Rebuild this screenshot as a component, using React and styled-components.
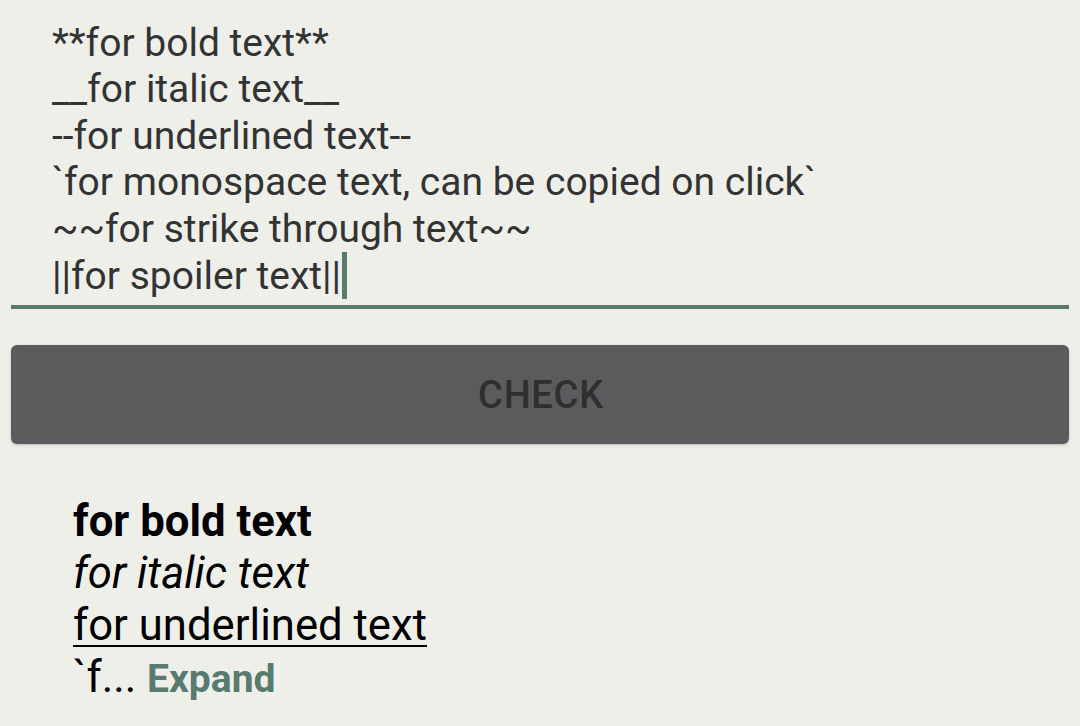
import React from "react";
import styled, { createGlobalStyle } from "styled-components";

const Global = createGlobalStyle`
  html, body {
    margin: 0;
    padding: 0;
    background: #efefea;
  }
  body {
    font-family: Roboto, "Noto Sans", "Liberation Sans", sans-serif;
  }
`;

const Page = styled.div`
  width: 1080px;
  height: 726px;
  box-sizing: border-box;
  padding: 0 11px;
  background: #efefea;
  overflow: hidden;
`;

const Editor = styled.div`
  padding: 20px 0 6px 41px;
  border-bottom: 4px solid #587a6f;
  color: #333333;
  font-size: 39px;
  line-height: 46.4px;
`;

const Line = styled.div`
  white-space: pre;
`;

const Caret = styled.span`
  display: inline-block;
  width: 5px;
  height: 47px;
  margin-left: 1px;
  background: #587a6f;
  vertical-align: -10px;
`;

const CheckButton = styled.button`
  display: flex;
  align-items: center;
  justify-content: center;
  width: 100%;
  height: 99px;
  margin-top: 36px;
  border: none;
  border-radius: 6px;
  background: #5b5b5d;
  box-shadow: 0 1px 3px rgba(0, 0, 0, 0.22);
  color: #2f2f2f;
  font-family: Roboto, "Noto Sans", "Liberation Sans", sans-serif;
  font-weight: 500;
  font-size: 38px;
  letter-spacing: 0.02em;
  padding: 0 0 0 2px;
`;

const Output = styled.div`
  padding: 51px 0 0 62px;
  color: #000000;
  font-size: 43.7px;
  line-height: 52px;
`;

const OutLine = styled.div`
  font-weight: ${(p) => (p.$bold ? 700 : 400)};
  font-style: ${(p) => (p.$italic ? "italic" : "normal")};
  text-decoration: ${(p) => (p.$underline ? "underline" : "none")};
  text-decoration-thickness: 2px;
  text-underline-offset: 5px;
  white-space: pre;
`;

const Expand = styled.span`
  color: #587a6f;
  font-weight: 700;
  font-size: 39px;
`;

export default function App() {
  return (
    <Page>
      <Global />
      <Editor>
        <Line>**for bold text**</Line>
        <Line>__for italic text__</Line>
        <Line>--for underlined text--</Line>
        <Line>`for monospace text, can be copied on click`</Line>
        <Line>~~for strike through text~~</Line>
        <Line>
          ||for spoiler text||
          <Caret />
        </Line>
      </Editor>
      <CheckButton>CHECK</CheckButton>
      <Output>
        <OutLine $bold>for bold text</OutLine>
        <OutLine $italic>for italic text</OutLine>
        <OutLine $underline>for underlined text</OutLine>
        <OutLine>
          `f... <Expand>Expand</Expand>
        </OutLine>
      </Output>
    </Page>
  );
}
